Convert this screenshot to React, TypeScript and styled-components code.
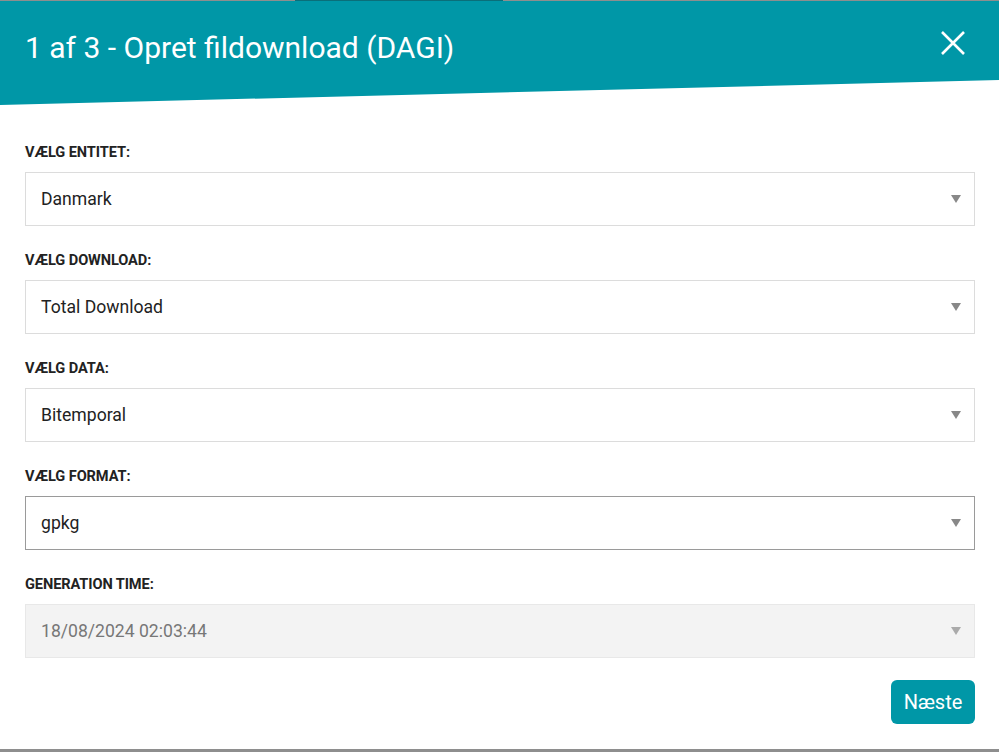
import React from 'react';
import styled, { createGlobalStyle } from 'styled-components';

const GlobalStyle = createGlobalStyle`
  html, body {
    margin: 0;
    padding: 0;
    background: #8e8e8e;
    font-family: Roboto, "Liberation Sans", Arial, sans-serif;
  }
  * { box-sizing: border-box; }
`;

const fields = [
  { label: 'Vælg entitet:', value: 'Danmark' },
  { label: 'Vælg download:', value: 'Total Download' },
  { label: 'Vælg data:', value: 'Bitemporal' },
  { label: 'Vælg format:', value: 'gpkg', focused: true },
  { label: 'Generation time:', value: '18/08/2024 02:03:44', disabled: true },
];

export default function App() {
  return (
    <>
      <GlobalStyle />
      <Backdrop>
        <TopStrip>
          <TabMark />
        </TopStrip>
        <Modal>
          <Header>
            <Title>1 af 3 - Opret fildownload (DAGI)</Title>
            <CloseButton aria-label="Luk">
              <svg width="26" height="26" viewBox="0 0 26 26">
                <path d="M2 2 L24 24 M24 2 L2 24" stroke="#fff" strokeWidth="2.6" fill="none" />
              </svg>
            </CloseButton>
          </Header>
          <Body>
            {fields.map((f) => (
              <Field key={f.label}>
                <Label>{f.label}</Label>
                <SelectBox $focused={f.focused} $disabled={f.disabled}>
                  <span>{f.value}</span>
                  <Arrow $disabled={f.disabled} />
                </SelectBox>
              </Field>
            ))}
            <Footer>
              <NextButton>Næste</NextButton>
            </Footer>
          </Body>
        </Modal>
      </Backdrop>
    </>
  );
}

const Backdrop = styled.div`
  width: 999px;
  height: 752px;
  overflow: hidden;
  display: flex;
  flex-direction: column;
`;

const TopStrip = styled.div`
  height: 1px;
  flex-shrink: 0;
  padding-left: 295px;
`;

const TabMark = styled.div`
  width: 208px;
  height: 1px;
  background: #0a6f7a;
`;

const Modal = styled.div`
  height: 748px;
  flex-shrink: 0;
  background: #fff;
  display: flex;
  flex-direction: column;
`;

const Header = styled.header`
  height: 104px;
  background: #0097a7;
  clip-path: polygon(0 0, 100% 0, 100% 79px, 0 100%);
  display: flex;
  justify-content: space-between;
  align-items: flex-start;
  padding: 27px 33px 0 25px;
`;

const Title = styled.h1`
  margin: 0;
  color: #fff;
  font-size: 30px;
  font-weight: 400;
  line-height: 40px;
`;

const CloseButton = styled.button`
  background: none;
  border: none;
  padding: 0;
  margin-top: 2px;
  width: 26px;
  height: 26px;
  cursor: pointer;
  display: flex;
`;

const Body = styled.div`
  padding: 37px 24px 0 25px;
  display: flex;
  flex-direction: column;
`;

const Field = styled.div`
  display: flex;
  flex-direction: column;
  margin-bottom: 24px;
`;

const Label = styled.label`
  font-size: 14.6px;
  font-weight: 700;
  line-height: 20px;
  color: #222;
  text-transform: uppercase;
  letter-spacing: -0.1px;
  margin-bottom: 10px;
`;

const SelectBox = styled.div<{ $focused?: boolean; $disabled?: boolean }>`
  height: 54px;
  border: 1px solid ${({ $focused, $disabled }) => ($focused ? '#9a9a9a' : $disabled ? '#e8e8e8' : '#dcdcdc')};
  background: ${({ $disabled }) => ($disabled ? '#f3f3f3' : '#fff')};
  color: ${({ $disabled }) => ($disabled ? '#777' : '#222')};
  font-size: 17.6px;
  display: flex;
  align-items: center;
  justify-content: space-between;
  padding: 0 13px 0 15px;
`;

const Arrow = styled.span<{ $disabled?: boolean }>`
  width: 0;
  height: 0;
  border-left: 5px solid transparent;
  border-right: 5px solid transparent;
  border-top: 8px solid ${({ $disabled }) => ($disabled ? '#aaa' : '#888')};
`;

const Footer = styled.div`
  display: flex;
  justify-content: flex-end;
  margin-top: -2px;
`;

const NextButton = styled.button`
  background: #0097a7;
  color: #fff;
  border: none;
  border-radius: 6px;
  height: 44px;
  width: 84px;
  font-family: Roboto, "Liberation Sans", Arial, sans-serif;
  font-size: 20px;
  cursor: pointer;
`;
